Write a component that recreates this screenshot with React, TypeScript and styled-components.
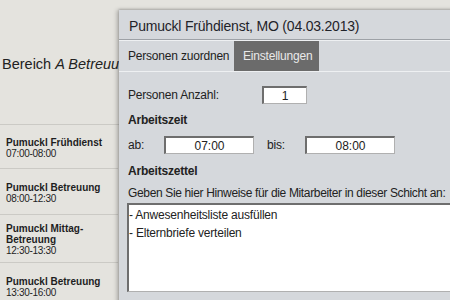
import styled, { createGlobalStyle } from "styled-components";

const GlobalStyle = createGlobalStyle`
  html, body {
    margin: 0;
    padding: 0;
    width: 450px;
    height: 300px;
    overflow: hidden;
    background: #e4e3de;
    font-family: "Liberation Sans", Arial, sans-serif;
    color: #222;
  }
`;

const shifts = [
  { name: "Pumuckl Frühdienst", time: "07:00-08:00", height: 44 },
  { name: "Pumuckl Betreuung", time: "08:00-12:30", height: 46 },
  { name: "Pumuckl Mittag-Betreuung", time: "12:30-13:30", height: 48 },
  { name: "Pumuckl Betreuung", time: "13:30-16:00", height: 46 },
];

const App = () => {
  return (
    <>
      <GlobalStyle />
      <Page>
        <Header>
          <AreaTitle>
            Bereich <em>A Betreuung</em>
          </AreaTitle>
        </Header>
        <ShiftList>
          {shifts.map((s, i) => (
            <ShiftRow key={i} $height={s.height}>
              <ShiftName>{s.name}</ShiftName>
              <ShiftTime>{s.time}</ShiftTime>
            </ShiftRow>
          ))}
        </ShiftList>

        <Dialog>
          <DialogTitle>Pumuckl Frühdienst, MO (04.03.2013)</DialogTitle>
          <Tabs>
            <Tab $width={115}>Personen zuordnen</Tab>
            <Tab $width={85} $active>
              Einstellungen
            </Tab>
          </Tabs>
          <DialogBody>
            <FieldRow>
              <Label $width={134}>Personen Anzahl:</Label>
              <Input $width={45} defaultValue="1" />
            </FieldRow>
            <SectionTitle $top={8}>Arbeitszeit</SectionTitle>
            <FieldRow>
              <Label $width={36}>ab:</Label>
              <Input $width={90} defaultValue="07:00" />
              <Label $width={51} $pad={13}>
                bis:
              </Label>
              <Input $width={90} defaultValue="08:00" />
            </FieldRow>
            <SectionTitle $top={9}>Arbeitszettel</SectionTitle>
            <Hint>Geben Sie hier Hinweise für die Mitarbeiter in dieser Schicht an:</Hint>
            <Notes
              defaultValue={"- Anwesenheitsliste ausfüllen\n- Elternbriefe verteilen"}
            />
          </DialogBody>
        </Dialog>
      </Page>
    </>
  );
};

export default App;

const Page = styled.div`
  position: relative;
  width: 450px;
  height: 300px;
  overflow: hidden;
  background: #e4e3de;
`;

const Header = styled.div`
  box-sizing: border-box;
  height: 125px;
  padding-top: 4px;
  border-bottom: 1px solid #cbcac5;
  display: flex;
  align-items: center;
`;

const AreaTitle = styled.div`
  padding-left: 2px;
  font-size: 14.5px;
  line-height: 18px;
  white-space: nowrap;

  em {
    font-style: italic;
  }
`;

const ShiftList = styled.div`
  width: 118px;
  display: flex;
  flex-direction: column;
`;

const ShiftRow = styled.div<{ $height: number }>`
  height: ${(p) => p.$height}px;
  box-sizing: border-box;
  border-bottom: 1px solid #cbcac5;
  padding: 2px 0 0 6px;
  display: flex;
  flex-direction: column;
  justify-content: center;
`;

const ShiftName = styled.div`
  font-size: 10px;
  font-weight: bold;
  line-height: 11px;
  width: 108px;
  color: #1e1e1e;
`;

const ShiftTime = styled.div`
  font-size: 10px;
  line-height: 11px;
  letter-spacing: -0.3px;
  color: #1e1e1e;
`;

const Dialog = styled.div`
  position: absolute;
  left: 119px;
  top: 10px;
  width: 360px;
  height: 300px;
  background: #d5d8dc;
  box-shadow: -2px 0 4px rgba(0, 0, 0, 0.25), 0 -1px 2px rgba(0, 0, 0, 0.15);
`;

const DialogTitle = styled.div`
  height: 30px;
  box-sizing: border-box;
  padding: 7px 0 0 10px;
  font-size: 14px;
  letter-spacing: -0.2px;
  line-height: 18px;
  color: #1f2329;
  border-bottom: 1px solid #9da1a6;
  white-space: nowrap;
`;

const Tabs = styled.div`
  display: flex;
  height: 32px;
  box-sizing: border-box;
  border-top: 1px solid #eef0f2;
  border-bottom: 1px solid #eef0f2;
`;

const Tab = styled.div<{ $active?: boolean; $width: number }>`
  height: 30px;
  box-sizing: border-box;
  padding: 8px 0 0 9px;
  width: ${(p) => p.$width}px;
  font-size: 12px;
  letter-spacing: -0.2px;
  line-height: 15px;
  white-space: nowrap;
  background: ${(p) => (p.$active ? "#6b6b6b" : "transparent")};
  color: ${(p) => (p.$active ? "#e9e9e9" : "#222")};
`;

const DialogBody = styled.div`
  padding: 14px 0 0 9px;
  display: flex;
  flex-direction: column;
`;

const FieldRow = styled.div`
  display: flex;
  align-items: center;
  height: 18px;
`;

const Label = styled.div<{ $width: number; $pad?: number }>`
  width: ${(p) => p.$width}px;
  flex-shrink: 0;
  box-sizing: border-box;
  padding-left: ${(p) => p.$pad ?? 0}px;
  font-size: 12px;
  letter-spacing: -0.2px;
  white-space: nowrap;
`;

const Input = styled.input<{ $width: number }>`
  width: ${(p) => p.$width}px;
  height: 18px;
  box-sizing: border-box;
  border-style: solid;
  border-color: #6e6e6e #b0b0b0 #b0b0b0 #6e6e6e;
  border-width: 2px 1px 1px 2px;
  background: #fff;
  text-align: center;
  font-family: "Liberation Sans", Arial, sans-serif;
  font-size: 12px;
  color: #222;
  padding: 0;
  outline: none;
`;

const SectionTitle = styled.div<{ $top: number }>`
  margin: ${(p) => p.$top}px 0 8px;
  font-size: 12px;
  font-weight: bold;
  line-height: 16px;
  letter-spacing: -0.2px;
`;

const Hint = styled.div`
  margin-top: -2px;
  font-size: 12px;
  line-height: 16px;
  letter-spacing: -0.35px;
  white-space: nowrap;
`;

const Notes = styled.textarea`
  margin: 2px 0 0 -1px;
  width: 340px;
  height: 89px;
  box-sizing: border-box;
  border-style: solid;
  border-color: #6e6e6e #b0b0b0 #b0b0b0 #6e6e6e;
  border-width: 2px 1px 1px 2px;
  background: #fff;
  resize: none;
  padding: 1px 0 0 0;
  font-family: "Liberation Sans", Arial, sans-serif;
  font-size: 12px;
  letter-spacing: -0.2px;
  line-height: 18px;
  color: #222;
  outline: none;
`;
